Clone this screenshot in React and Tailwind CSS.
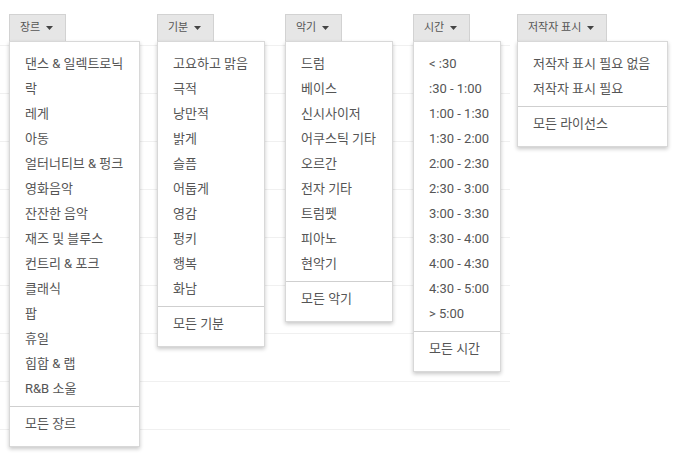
import React from 'react'

const filtros = [
  {
    label: '장르',
    col: 'w-[148px]',
    menu: 'w-[131px]',
    opciones: [
      '댄스 & 일렉트로닉', '락', '레게', '아동', '얼터너티브 & 펑크', '영화음악', '잔잔한 음악',
      '재즈 및 블루스', '컨트리 & 포크', '클래식', '팝', '휴일', '힙합 & 랩', 'R&B 소울'
    ],
    todos: '모든 장르'
  },
  {
    label: '기분',
    col: 'w-[128px]',
    menu: 'w-[108px]',
    opciones: ['고요하고 맑음', '극적', '낭만적', '밝게', '슬픔', '어둡게', '영감', '펑키', '행복', '화남'],
    todos: '모든 기분'
  },
  {
    label: '악기',
    col: 'w-[128px]',
    menu: 'w-[108px]',
    opciones: ['드럼', '베이스', '신시사이저', '어쿠스틱 기타', '오르간', '전자 기타', '트럼펫', '피아노', '현악기'],
    todos: '모든 악기'
  },
  {
    label: '시간',
    col: 'w-[104px]',
    menu: 'w-[88px]',
    opciones: ['< :30', ':30 - 1:00', '1:00 - 1:30', '1:30 - 2:00', '2:00 - 2:30', '2:30 - 3:00', '3:00 - 3:30',
      '3:30 - 4:00', '4:00 - 4:30', '4:30 - 5:00', '> 5:00'],
    todos: '모든 시간'
  },
  {
    label: '저작자 표시',
    col: 'w-[160px]',
    menu: 'w-[151px]',
    opciones: ['저작자 표시 필요 없음', '저작자 표시 필요'],
    todos: '모든 라이선스'
  }
]

function Flecha() {
  return (
    <svg width="7" height="4" viewBox="0 0 7 4" className="ml-[6px]">
      <path d="M0 0h7L3.5 4z" fill="#444" />
    </svg>
  )
}

function Filtro({ f }) {
  return (
    <div className={`relative ${f.col}`}>
      <button className="h-[27px] flex items-center pl-[10px] pr-[12px] bg-[#e6e6e6] border border-b-0 border-[#d2d2d2] text-[11px] text-[#555]">
        {f.label}
        <Flecha />
      </button>

      {/* menu desplegable */}
      <div className={`absolute left-0 top-[27px] z-10 ${f.menu} bg-white border border-[#d8d8d8] shadow-[0_2px_4px_rgba(0,0,0,0.22)] pt-[9px] pb-[10px]`}>
        {f.opciones.map((op) => (
          <div key={op} className="h-[25px] flex items-center pl-[15px] whitespace-nowrap text-[#555]">
            {op}
          </div>
        ))}
        <div className="mt-[5px] mb-[4px] h-px bg-[#cfcfcf]" />
        <div className="h-[25px] flex items-center pl-[15px] whitespace-nowrap text-[#555]">{f.todos}</div>
      </div>
    </div>
  )
}

export default function App() {
  return (
    <div
      className="relative w-[690px] h-[469px] bg-white overflow-hidden text-[13px]"
      style={{ fontFamily: 'Roboto, "Noto Sans CJK KR", sans-serif' }}
    >
      <div className="flex pt-[14px] pl-[9px] relative z-10">
        {filtros.map((f) => (
          <Filtro key={f.label} f={f} />
        ))}
      </div>

      {/* filas de la tabla detras */}
      <div className="mt-[4px] w-[510px]">
        {[0, 1, 2, 3, 4, 5, 6, 7, 8].map((i) => (
          <div key={i} className="h-[48px] border-t border-[#f0f0f0]" />
        ))}
      </div>
    </div>
  )
}
